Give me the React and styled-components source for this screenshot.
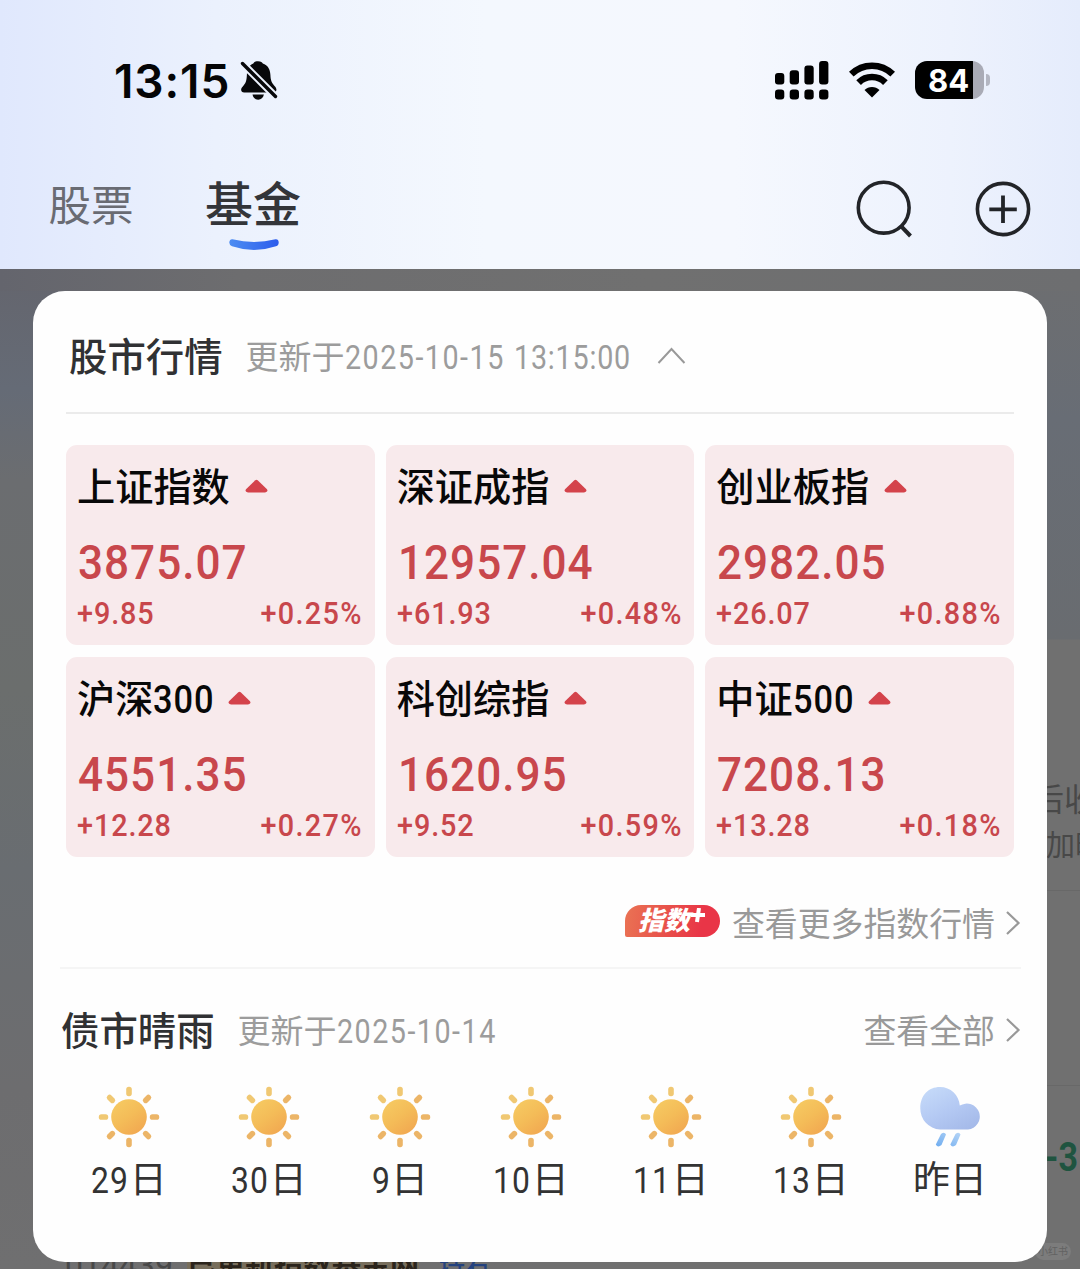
import React from "react";
import styled, { createGlobalStyle } from "styled-components";

const Global = createGlobalStyle`
  * { box-sizing: border-box; }
  html, body { margin: 0; padding: 0; }
  body {
    width: 1080px;
    height: 1269px;
    overflow: hidden;
    font-family: Roboto, "Noto Sans CJK SC", sans-serif;
  }
`;

const Page = styled.div`
  width: 1080px;
  height: 1269px;
  display: flex;
  flex-direction: column;
  overflow: hidden;
`;

const Header = styled.header`
  height: 269px;
  flex: none;
  background: linear-gradient(90deg, #e0e8fd 0%, #ebf1fd 20%, #f4f8fe 45%, #f5f8fe 68%, #edf2fd 88%, #e5ecfc 100%);
`;

const StatusBar = styled.div`
  height: 162px;
  padding: 0 90px 0 114px;
  display: flex;
  align-items: center;
`;

const Clock = styled.span`
  width: 126px;
  font: 600 46px/60px Inter, sans-serif;
  letter-spacing: 0.9px;
  color: #050506;
`;

const StatusIcons = styled.div`
  margin: -2px 0 0 auto;
  display: flex;
  align-items: center;
`;

const WifiIcon = styled.svg`
  margin: 0 20px 0 20px;
`;

const Battery = styled.div`
  width: 69px;
  height: 38px;
  border-radius: 12px;
  background: linear-gradient(90deg, #000 58px, #a9abb6 58px);
  color: #fff;
  font: 700 31px/39px Inter, sans-serif;
  padding-left: 13px;
`;

const BatteryNub = styled.div`
  width: 4px;
  height: 12px;
  margin-left: 2px;
  border-radius: 0 5px 5px 0;
  background: #b3b6c2;
`;

const NavBar = styled.nav`
  height: 107px;
  padding: 0 48px;
  display: flex;
  align-items: flex-start;
`;

const Tab = styled.div`
  display: flex;
  flex-direction: column;
  align-items: center;
  width: ${(p) => p.$width}px;
  margin-right: 71px;
  padding-top: ${(p) => (p.$active ? 11 : 12)}px;
  font-size: ${(p) => (p.$active ? 48 : 42.5)}px;
  font-weight: ${(p) => (p.$active ? 500 : 400)};
  line-height: 66px;
  white-space: nowrap;
  color: ${(p) => (p.$active ? "#333539" : "#696b73")};
`;

const Curve = styled.svg`
  margin: -1px 0 0 2px;
`;

const NavActions = styled.div`
  margin-left: auto;
  padding-top: 16px;
  display: flex;
  gap: 61px;
`;

const Backdrop = styled.main`
  position: relative;
  flex: 1;
  padding: 22px 33px 7px;
  background:
    linear-gradient(90deg, #64656d 0, #6d6d6f 22%, #707070 60%, #6d6e70 100%) 0 0 / 100% 22px no-repeat,
    linear-gradient(180deg, #64656d 0, #656b76 120px, #6b6d70 210px, #6b6e6d 420px, #696d71 600px, #6d6d6f 820px, #6f6f70 1000px) 0 0 / 540px 100% no-repeat,
    linear-gradient(180deg, #6d6e70 0, #686d75 150px, #696c70 370px, #707070 371px);
`;

const Behind = styled.span`
  position: absolute;
  left: ${(p) => p.$x}px;
  top: ${(p) => p.$y}px;
  font-size: ${(p) => p.$size}px;
  line-height: 40px;
  font-weight: ${(p) => p.$weight || 400};
  color: ${(p) => p.$color || "#484848"};
  background: ${(p) => p.$bg || "none"};
  white-space: nowrap;
`;

const BehindRule = styled.div`
  position: absolute;
  right: 0;
  top: ${(p) => p.$y}px;
  width: 34px;
  height: 1px;
  background: #686868;
`;

const Watermark = styled.div`
  position: absolute;
  right: 9px;
  bottom: 9px;
  width: 36px;
  height: 17px;
  border-radius: 9px;
  background: #7c7c7c;
  color: #626262;
  font-size: 10px;
  line-height: 17px;
  text-align: center;
`;

const Card = styled.section`
  position: relative;
  height: 971px;
  border-radius: 32px;
  background: #fefefe;
  padding: 0 27px;
  overflow: hidden;
`;

const MarketSection = styled.div`
  padding: 0 6px;
`;

const MarketHeader = styled.div`
  height: 123px;
  padding: 9px 3px 0;
  border-bottom: 2px solid #ebebeb;
  display: flex;
  align-items: center;
`;

const Title = styled.h2`
  margin: 0;
  padding-top: 3px;
  font-size: 38.4px;
  line-height: 50px;
  font-weight: 500;
  color: #303133;
  white-space: nowrap;
`;

const Updated = styled.span`
  padding-top: 4px;
  margin-left: 23px;
  font-size: 33px;
  line-height: 50px;
  color: #9c9c9c;
  white-space: nowrap;
`;

/* Narrow numerals: $width is the room they take after the squeeze. */
const Digits = styled.span`
  display: inline-block;
  width: ${(p) => (p.$width ? `${p.$width}px` : "auto")};
  font-weight: ${(p) => p.$weight || "inherit"};
  letter-spacing: ${(p) => p.$track || 0}px;
  transform: scaleX(${(p) => p.$squeeze || 0.9});
  transform-origin: ${(p) => (p.$end ? "right" : "left")};
  white-space: nowrap;
`;

const Caret = styled.svg`
  margin-left: 26px;
`;

const TileGrid = styled.div`
  margin-top: 31px;
  display: grid;
  grid-template-columns: repeat(3, 1fr);
  gap: 12px 11px;
`;

const Tile = styled.article`
  height: 200px;
  padding: 15px 12px 0 11px;
  border-radius: 11px;
  background: #f8eaec;
  color: #c8474c;
`;

const TileName = styled.div`
  height: 54px;
  display: flex;
  align-items: center;
  gap: 15px;
  font-size: 38.2px;
  line-height: 54px;
  font-weight: 500;
  color: #080808;
`;

const NameText = styled.span`
  padding-top: 1px;
`;

const Triangle = styled.svg`
  margin-bottom: 2px;
`;

const TileValue = styled.div`
  height: 60px;
  margin-top: 19px;
  padding-left: 1px;
  font-size: 49px;
  line-height: 60px;
  font-weight: 500;
`;

const TileChange = styled.div`
  display: flex;
  justify-content: space-between;
  margin-top: 3px;
  font-size: 32px;
  line-height: 34px;
  font-weight: 500;
`;

const MoreRow = styled.div`
  height: 112px;
  padding-top: 22px;
  margin-right: -1px;
  display: flex;
  align-items: center;
  justify-content: flex-end;
  border-bottom: 2px solid #f5f5f5;
`;

const Badge = styled.div`
  width: 95px;
  height: 32px;
  margin: 0 12px 4px 0;
  padding-left: 13px;
  border-radius: 16px 16px 16px 2px;
  background: linear-gradient(100deg, #ea7354 0%, #e8504a 45%, #e93547 80%);
  color: #fff;
  font-size: 26px;
  font-weight: 900;
  font-style: italic;
  line-height: 33px;
  display: flex;
`;

const BadgePlus = styled.svg`
  margin: 3px 0 0 0;
`;

const MoreText = styled.span`
  padding-top: 4px;
  font-size: 32.9px;
  line-height: 40px;
  color: #999;
  white-space: nowrap;
`;

const Arrow = styled.svg`
  margin-left: 11px;
`;

const BondHeader = styled.div`
  height: 122px;
  padding-left: 1px;
  margin-right: -1px;
  display: flex;
  align-items: center;
`;

const Spacer = styled.div`
  flex: 1;
`;

const Days = styled.div`
  display: flex;
  margin: -5px 0 0 -1px;
`;

const Day = styled.div`
  flex: none;
  width: ${(p) => p.$width}px;
  display: flex;
  flex-direction: column;
  align-items: center;
  font-size: 37px;
  line-height: 50px;
  color: #333;
  gap: 8px;
`;

function Bell() {
  return (
    <svg width="40" height="42" viewBox="0 0 40 42" fill="#08080a">
      <path d="M18 1.2c3 0 4.3 1.2 4.8 2.4 5 1.6 7.4 5.800 7.600 11.200.2 6.200 1.600 8.400 4.600 11.700 2.500 2.700 1.600 6.100-1.700 6.100H4.200C1 32.600 0 29.400 2.600 26.700c3-3.200 4-5.400 4.300-11.900C7.100 9.200 9 5.200 13.300 3.600 13.800 2.200 15.300 1.200 18 1.200z" />
      <path d="M12.500 34.500h11.400c-.7 3.400-2.800 5.200-5.700 5.200s-5-1.800-5.700-5.200z" />
      <path d="M1 2 38 39" stroke="#edf2fd" strokeWidth="7.600" />
      <path d="M2.500 3.500 35.500 36.500" stroke="#08080a" strokeWidth="3.400" strokeLinecap="round" />
    </svg>
  );
}

function Signal() {
  const tops = [12, 9.300, 4.600, 0];
  return (
    <svg width="54" height="39" viewBox="0 0 54 39">
      {tops.map((top, i) => (
        <g key={top}>
          <rect x={i * 14.700} y={top} width="9.300" height={23.500 - top} rx="3" />
          <rect x={i * 14.700} y="28.500" width="9.300" height="10" rx="3.200" />
        </g>
      ))}
    </svg>
  );
}

function Wifi() {
  return (
    <WifiIcon width="46" height="36" viewBox="0 0 46 36" fill="none" stroke="#000" strokeWidth="6.600">
      <path d="M2.300 12.200a29.500 29.500 0 0 1 41.400 0" />
      <path d="M9.600 20.600a19 19 0 0 1 26.800 0" />
      <path d="M15.500 28a10.600 10.600 0 0 1 15 0L23 35.500z" fill="#000" stroke="none" />
    </WifiIcon>
  );
}

function TabCurve() {
  return (
    <Curve width="52" height="14" viewBox="0 0 52 14">
      <defs>
        <linearGradient id="curve" x1="0" x2="1">
          <stop offset="0" stopColor="#4d8df2" />
          <stop offset="1" stopColor="#2c5cec" />
        </linearGradient>
      </defs>
      <path d="M4.500 1.300Q26 6.600 47.500 1.300Q50.500 1 50.700 4.200Q50.800 7.400 48 8.200Q26 15.600 4 8.200Q1.200 7.200 1.300 4.200Q1.700 1 4.500 1.300Z" fill="url(#curve)" />
    </Curve>
  );
}

function Sun() {
  return (
    <svg width="62" height="62" viewBox="-31 -31 62 62">
      <defs>
        <linearGradient id="sun" x1="0.100" y1="0" x2="0.850" y2="1">
          <stop offset="0" stopColor="#f6cb63" />
          <stop offset="0.500" stopColor="#f4bc58" />
          <stop offset="1" stopColor="#f1a650" />
        </linearGradient>
      </defs>
      <circle r="17.800" fill="url(#sun)" />
      {[0, 45, 90, 135, 180, 225, 270, 315].map((a) => (
        <rect
          key={a}
          x="-2.800"
          y="-30.200"
          width="5.600"
          height="9.400"
          rx="2.600"
          transform={`rotate(${a})`}
          fill={a === 270 || a === 315 || a === 0 ? "#f0c873" : "#ecb567"}
        />
      ))}
    </svg>
  );
}

function RainCloud() {
  return (
    <svg width="62" height="62" viewBox="-0.500 0 62 62">
      <defs>
        <linearGradient id="cloud" x1="0.150" y1="0" x2="0.900" y2="1">
          <stop offset="0" stopColor="#c5daf9" />
          <stop offset="0.500" stopColor="#b4c9f3" />
          <stop offset="1" stopColor="#a3b8e8" />
        </linearGradient>
        <linearGradient id="rain" x1="1" y1="0" x2="0" y2="1">
          <stop offset="0" stopColor="#b5d4f6" />
          <stop offset="1" stopColor="#6fadf0" />
        </linearGradient>
      </defs>
      <path d="M20.500 1C31 1 39.500 9 40.300 19.600A13 13 0 1 1 48.500 43.500H20.500A21 21 0 0 1 .8 22C.8 9.500 9 1 20.500 1z" fill="url(#cloud)" />
      <path d="M21.500 48q3.500-2.500 5 .5l-4.500 10.500q-3.700 3-5.700-.5zM36 48q3.500-2.500 5 .5l-4.500 10.500q-3.700 3-5.700-.5z" fill="url(#rain)" />
    </svg>
  );
}

function RightArrow() {
  return (
    <Arrow width="15" height="26" viewBox="1 0 15 26" fill="none" stroke="#999" strokeWidth="2.200">
      <path d="M2 2 13.500 13 2 24" />
    </Arrow>
  );
}

const indices = [
  { name: "上证指数", value: "3875.07", change: "+9.85", pct: "+0.25%" },
  { name: "深证成指", value: "12957.04", change: "+61.93", pct: "+0.48%" },
  { name: "创业板指", value: "2982.05", change: "+26.07", pct: "+0.88%" },
  { name: "沪深", num: "300", value: "4551.35", change: "+12.28", pct: "+0.27%" },
  { name: "科创综指", value: "1620.95", change: "+9.52", pct: "+0.59%" },
  { name: "中证", num: "500", value: "7208.13", change: "+13.28", pct: "+0.18%" },
];

const days = [
  { num: "29", width: 140 },
  { num: "30", width: 140 },
  { num: "9", width: 122 },
  { num: "10", width: 140 },
  { num: "11", width: 140 },
  { num: "13", width: 140 },
  { label: "昨", width: 138, rain: true },
];

export default function App() {
  return (
    <Page>
      <Global />
      <Header>
        <StatusBar>
          <Clock>13:15</Clock>
          <Bell />
          <StatusIcons>
            <Signal />
            <Wifi />
            <Battery>84</Battery>
            <BatteryNub />
          </StatusIcons>
        </StatusBar>
        <NavBar>
          <Tab $width={86}>股票</Tab>
          <Tab $width={96} $active>
            基金
            <TabCurve />
          </Tab>
          <NavActions>
            <svg width="60" height="60" viewBox="0 0 60 60" fill="none" stroke="#222428" strokeWidth="3.600">
              <circle cx="30.700" cy="29.700" r="25.400" />
              <path d="M47.300 47.300 57.500 58" strokeWidth="4" />
            </svg>
            <svg width="58" height="60" viewBox="0 0 58 60" fill="none" stroke="#222428" strokeWidth="3.600">
              <circle cx="29" cy="31" r="25.600" />
              <path d="M29 17.500v27.500M15.300 31.300h27.500" strokeWidth="3.800" />
            </svg>
          </NavActions>
        </NavBar>
      </Header>
      <Backdrop>
        <Behind $x={1032} $y={511} $size={32}>后收</Behind>
        <Behind $x={1046} $y={557} $size={29}>加时</Behind>
        <BehindRule $y={621} />
        <BehindRule $y={816} />
        <Behind $x={1045} $y={869} $size={40} $weight={700} $color="#1f5440">
          <Digits $squeeze={0.85} $width={32}>-3</Digits>
        </Behind>
        <Behind $x={65} $y={976} $size={32}>014439</Behind>
        <Behind $x={187} $y={976} $size={29} $weight={700} $color="#2b241b" $bg="#776e5c">已更新指数基金网</Behind>
        <Behind $x={439} $y={980} $size={26} $weight={500} $color="#24427e">持有</Behind>
        <Watermark>小红书</Watermark>
        <Card>
          <MarketSection>
            <MarketHeader>
              <Title>股市行情</Title>
              <Updated>
                更新于
                <Digits $squeeze={0.87} $track={1.7} $width={169.5}>2025-10-15</Digits>
                <Digits $squeeze={0.87} $track={0.9} $width={117}>13:15:00</Digits>
              </Updated>
              <Caret width="29" height="20" viewBox="0 0 29 20" fill="none" stroke="#999" strokeWidth="2">
                <path d="M1.500 17 14.500 3 27.500 17" />
              </Caret>
            </MarketHeader>
            <TileGrid>
              {indices.map((it) => (
                <Tile key={it.name}>
                  <TileName>
                    <NameText>
                      {it.name}
                      {it.num && <Digits $track={1.1} $width={60}>{it.num}</Digits>}
                    </NameText>
                    <Triangle width="23" height="15" viewBox="0 0 23 15" fill="#d4434b">
                      <path d="M10.300 1.200q1.200-1 2.400 0L22 10.200q1.200 1.800-.6 2.700-1.400.6-3 .6H4.600q-1.600 0-3-.6-1.800-.9-.6-2.700z" />
                    </Triangle>
                  </TileName>
                  <TileValue>
                    <Digits $track={1.1}>{it.value}</Digits>
                  </TileValue>
                  <TileChange>
                    <Digits $track={1}>{it.change}</Digits>
                    <Digits $track={1.5} $end>{it.pct}</Digits>
                  </TileChange>
                </Tile>
              ))}
            </TileGrid>
          </MarketSection>
          <MoreRow>
            <Badge>
              指数
              <BadgePlus width="16" height="15" viewBox="0 0 16 15" stroke="#fff" strokeWidth="4">
                <path d="M9 0 7 14M1 7h14" />
              </BadgePlus>
            </Badge>
            <MoreText>查看更多指数行情</MoreText>
            <RightArrow />
          </MoreRow>
          <BondHeader>
            <Title>债市晴雨</Title>
            <Updated>
              更新于<Digits $squeeze={0.87} $track={1.7} $width={160}>2025-10-14</Digits>
            </Updated>
            <Spacer />
            <MoreText>查看全部</MoreText>
            <RightArrow />
          </BondHeader>
          <Days>
            {days.map((d) => (
              <Day key={d.num || d.label} $width={d.width}>
                {d.rain ? <RainCloud /> : <Sun />}
                <span>
                  {d.label}
                  {d.num && <Digits $squeeze={0.86} $track={1.2} $width={d.num.length * 19.2}>{d.num}</Digits>}日
                </span>
              </Day>
            ))}
          </Days>
        </Card>
      </Backdrop>
    </Page>
  );
}
